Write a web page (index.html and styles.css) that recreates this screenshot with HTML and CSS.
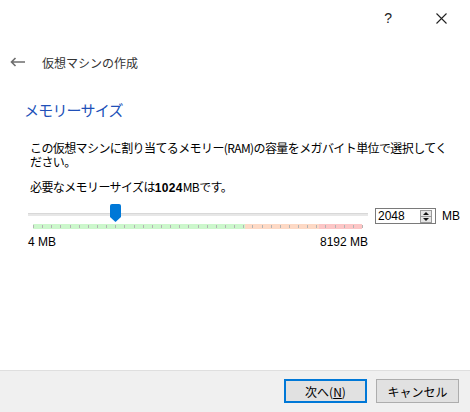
FILE: index.html
```html
<!DOCTYPE html>
<html lang="ja">
<head>
    <meta charset="UTF-8">
    <title>仮想マシンの作成</title>

    <link rel="stylesheet" href="styles.css">
</head>
<body>
<div class="dialog">
    <div class="titlebar">
        <span class="help">?</span>
        <svg class="close" width="11" height="11" viewBox="0 0 11 11">
            <path d="M0.5 0.5 L10.5 10.5 M10.5 0.5 L0.5 10.5" stroke="#222" stroke-width="1.1" fill="none"/>
        </svg>
    </div>

    <div class="header">
        <svg class="back" width="15" height="10" viewBox="0 0 15 10">
            <path d="M15 5 H2 M5.5 1 L1.5 5 L5.5 9" stroke="#6d6d6d" stroke-width="1.6" fill="none"/>
        </svg>
        <span class="title">仮想マシンの作成</span>
    </div>

    <div class="content">
        <h1>メモリーサイズ</h1>

        <p class="desc">この仮想マシンに割り当てるメモリー(RAM)の容量をメガバイト単位で選択してく<br>ださい。</p>
        <p class="required">必要なメモリーサイズは<b>1024</b>MBです。</p>

        <div class="slider-row">
            <div class="slider">
                <div class="track"></div>
                <div class="band">
                    <div class="green"></div>
                    <div class="orange"></div>
                    <div class="red"></div>
                    <div class="ticks"></div>
                </div>
                <!-- thumb sits over the track -->
                <svg class="thumb" width="11" height="18" viewBox="0 0 11 18">
                    <path d="M0 2 Q0 0 2 0 H9 Q11 0 11 2 V13 L5.5 18 L0 13 Z" fill="#0078d7"/>
                </svg>
            </div>

            <div class="spin">
                <span class="spin-value">2048</span>
                <svg class="spin-buttons" width="12" height="13" viewBox="0 0 12 13">
                    <rect x="0.5" y="0.5" width="11" height="12" fill="#e5e5e5" stroke="#9a9a9a"/>
                    <line x1="1" y1="6.5" x2="11" y2="6.5" stroke="#9a9a9a"/>
                    <path d="M3 5 L6 2 L9 5 Z" fill="#111"/>
                    <path d="M3 8 L6 11 L9 8 Z" fill="#111"/>
                </svg>
            </div>
            <span class="unit">MB</span>
        </div>

        <div class="scale">
            <span>4 MB</span>
            <span>8192 MB</span>
        </div>
    </div>

    <div class="footer">
        <button class="default">次へ(<u>N</u>)</button>
        <button>キャンセル</button>
    </div>
</div>
</body>
</html>
```

FILE: styles.css
```css
body {
    margin: 0;
    font-family: "Noto Sans CJK JP", "Liberation Sans", sans-serif;
    font-size: 12px;
    color: #000;
    background: #fff;
}

.dialog {
    width: 470px;
    height: 412px;
    display: flex;
    flex-direction: column;
}

.titlebar {
    height: 36px;
    display: flex;
    align-items: center;
    justify-content: flex-end;
    padding-right: 23px;
}

.help {
    font-family: "Liberation Sans", sans-serif;
    font-size: 14px;
    color: #222;
    margin-right: 44px;
}

.header {
    margin-top: 14px;
    height: 24px;
    display: flex;
    align-items: center;
    padding-left: 10px;
}

.back {
    margin-right: 17px;
}

.title {
    color: #333;
    font-size: 12px;
}

.content {
    flex: 1;
    padding: 0 8px 0 24px;
}

h1 {
    margin: 26px 0 0 0;
    height: 20px;
    line-height: 20px;
    font-size: 15px;
    font-weight: normal;
    letter-spacing: -0.8px;
    color: #2050b8;
}

.desc {
    margin: 21px 0 0 6px;
    line-height: 14px;
    letter-spacing: -0.6px;
    white-space: nowrap;
}

.required {
    margin: 11px 0 0 6px;
    line-height: 14px;
    letter-spacing: -0.6px;
}

.required b {
    font-family: "Liberation Sans", sans-serif;
    letter-spacing: 0.3px;
}

.slider-row {
    margin-top: 9px;
    padding-left: 4px;
    display: flex;
    align-items: flex-start;
}

.slider {
    position: relative;
    flex-shrink: 0;
    width: 340px;
    height: 25px;
}

.track {
    margin-top: 9px;
    height: 2px;
    background: #e7e7e7;
    border-top: 1px solid #d8d8d8;
}

.band {
    position: relative;
    margin: 8px 0 0 5px;
    width: 329px;
    height: 5px;
    display: flex;
}

.green {
    width: 212px;
    background: #ccf7cc;
}

.orange {
    width: 74px;
    background: #fdd9c5;
}

.red {
    flex: 1;
    background: #fcc6c6;
}

.ticks {
    position: absolute;
    left: 0;
    top: 1px;
    width: 330px;
    height: 3px;
    background: repeating-linear-gradient(to right, #b4b4b4 0 1px, transparent 1px 9.14px);
}

.thumb {
    position: absolute;
    left: 82px;
    top: 0;
}

.spin {
    flex-shrink: 0;
    margin: 4px 0 0 7px;
    width: 57px;
    height: 14px;
    border: 1px solid #7a7a7a;
    display: flex;
    align-items: center;
    justify-content: space-between;
    padding-left: 2px;
    box-sizing: content-box;
}

.spin-value {
    font-family: "Liberation Sans", sans-serif;
    font-size: 12px;
}

.spin-buttons {
    margin-right: 3px;
}

.unit {
    flex-shrink: 0;
    margin: 5px 0 0 6px;
    font-family: "Liberation Sans", sans-serif;
    font-size: 12px;
}

.scale {
    margin-top: 6px;
    padding-left: 4px;
    width: 340px;
    display: flex;
    justify-content: space-between;
    font-family: "Liberation Sans", sans-serif;
    line-height: 14px;
}

.footer {
    height: 42px;
    border-top: 1px solid #dfdfdf;
    background: #f0f0f0;
    display: flex;
    justify-content: flex-end;
    align-items: flex-start;
    padding: 8px 11px 0 0;
    box-sizing: border-box;
    gap: 9px;
}

.footer button {
    width: 83px;
    height: 24px;
    border: 1px solid #adadad;
    background: #e1e1e1;
    font-family: "Noto Sans CJK JP", sans-serif;
    font-size: 12px;
    color: #000;
    padding: 0;
}

.footer button.default {
    border: 2px solid #0078d7;
}
```
